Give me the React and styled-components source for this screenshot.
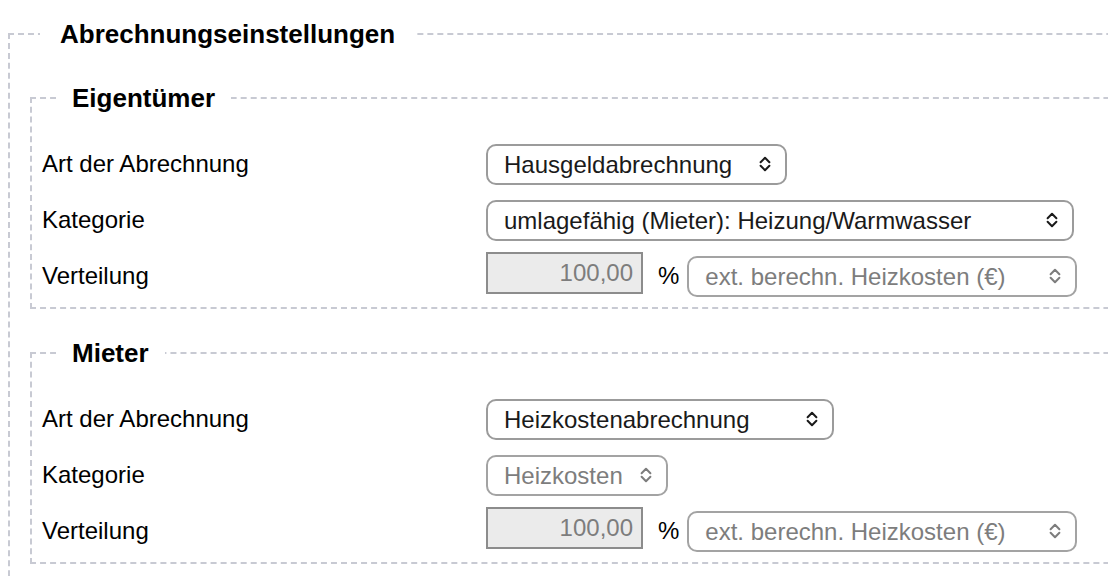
import styled, { createGlobalStyle } from "styled-components";

const GlobalStyle = createGlobalStyle`
  html, body {
    margin: 0;
    padding: 0;
    background: #ffffff;
    overflow: hidden;
  }
  body {
    font-family: "Liberation Sans", Arial, Helvetica, sans-serif;
    color: #000000;
  }
`;

const Page = styled.div`
  padding: 19px 0 0 8px;
`;

const Group = styled.fieldset`
  margin: 0;
  min-width: 0;
  border: 2px dashed #c8cad3;
  width: ${(p) => p.$width || "auto"};
  padding: ${(p) => p.$padding};
  & + & {
    margin-top: 29px;
  }
`;

const Legend = styled.legend`
  font-size: 26px;
  font-weight: bold;
  line-height: 30px;
  padding: 0 ${(p) => p.$pad}px;
  margin-left: ${(p) => p.$offset}px;
`;

const Row = styled.div`
  display: flex;
  align-items: center;
  height: 56px;
`;

const Label = styled.div`
  width: 444px;
  flex: none;
  font-size: 24px;
`;

const Controls = styled.div`
  display: flex;
  align-items: center;
`;

const SelectWrap = styled.div`
  position: relative;
  width: ${(p) => p.$width}px;
  height: 41px;
  flex: none;
`;

const Select = styled.select`
  appearance: none;
  -webkit-appearance: none;
  box-sizing: border-box;
  width: 100%;
  height: 100%;
  margin: 0;
  padding: 0 40px 0 16px;
  border: 2px solid #9b9b9b;
  border-radius: 10px;
  background: #ffffff;
  font-family: inherit;
  font-size: 24px;
  color: #1a1a1a;
  opacity: 1;
  &:disabled {
    color: #7d7d7d;
    border-color: #a3a3a3;
  }
`;

const Chevron = styled.svg`
  position: absolute;
  right: 16px;
  top: 50%;
  margin-top: -8px;
  pointer-events: none;
`;

const Amount = styled.input`
  box-sizing: border-box;
  width: 157px;
  height: 42px;
  margin: 0 0 6px 0;
  padding: 0 8px;
  border: 2px solid #8c8c8c;
  border-radius: 0;
  background: #ebebeb;
  font-family: inherit;
  font-size: 24px;
  text-align: right;
  color: #7d7d7d;
`;

const Unit = styled.span`
  font-size: 24px;
  margin: 0 8px 0 15px;
`;

function Dropdown({ width, value, disabled }) {
  const stroke = disabled ? "#7d7d7d" : "#1a1a1a";
  return (
    <SelectWrap $width={width}>
      <Select defaultValue={value} disabled={disabled}>
        <option value={value}>{value}</option>
      </Select>
      <Chevron width="12" height="16" viewBox="0 0 12 16">
        <path
          d="M1.6 6.2 L6 1.8 L10.4 6.2 M1.6 9.8 L6 14.2 L10.4 9.8"
          fill="none"
          stroke={stroke}
          strokeWidth="2"
          strokeLinecap="round"
          strokeLinejoin="round"
        />
      </Chevron>
    </SelectWrap>
  );
}

function Section({ title, type, typeWidth, category, categoryWidth, categoryDisabled }) {
  return (
    <Group $padding="23px 0 3px 10px">
      <Legend $pad={16} $offset={14}>
        {title}
      </Legend>
      <Row>
        <Label>Art der Abrechnung</Label>
        <Dropdown width={typeWidth} value={type} />
      </Row>
      <Row>
        <Label>Kategorie</Label>
        <Dropdown width={categoryWidth} value={category} disabled={categoryDisabled} />
      </Row>
      <Row>
        <Label>Verteilung</Label>
        <Controls>
          <Amount defaultValue="100,00" readOnly disabled />
          <Unit>%</Unit>
          <Dropdown width={390} value="ext. berechn. Heizkosten (€)" disabled />
        </Controls>
      </Row>
    </Group>
  );
}

export default function App() {
  return (
    <>
      <GlobalStyle />
      <Page>
        <Group $width="1260px" $padding="34px 0 40px 20px">
          <Legend $pad={20} $offset={10}>
            Abrechnungseinstellungen
          </Legend>
          <Section
            title="Eigentümer"
            type="Hausgeldabrechnung"
            typeWidth={301}
            category="umlagefähig (Mieter): Heizung/Warmwasser"
            categoryWidth={588}
          />
          <Section
            title="Mieter"
            type="Heizkostenabrechnung"
            typeWidth={348}
            category="Heizkosten"
            categoryWidth={182}
            categoryDisabled
          />
        </Group>
      </Page>
    </>
  );
}
